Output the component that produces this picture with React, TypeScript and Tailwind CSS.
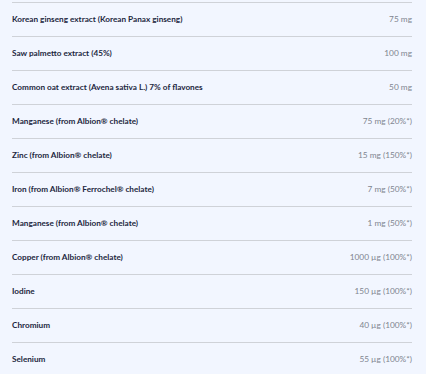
import React from "react";

const rows: [string, string][] = [
  ["Korean ginseng extract (Korean Panax ginseng)", "75 mg"],
  ["Saw palmetto extract (45%)", "100 mg"],
  ["Common oat extract (Avena sativa L.) 7% of flavones", "50 mg"],
  ["Manganese (from Albion® chelate)", "75 mg (20%*)"],
  ["Zinc (from Albion® chelate)", "15 mg (150%*)"],
  ["Iron (from Albion® Ferrochel® chelate)", "7 mg (50%*)"],
  ["Manganese (from Albion® chelate)", "1 mg (50%*)"],
  ["Copper (from Albion® chelate)", "1000 µg (100%*)"],
  ["Iodine", "150 µg (100%*)"],
  ["Chromium", "40 µg (100%*)"],
  ["Selenium", "55 µg (100%*)"],
];

export default function App() {
  return (
    <div className="w-[426px] h-[374px] overflow-hidden bg-[#f2f6ff] pt-[2px]" style={{ fontFamily: "Lato, 'Noto Sans', sans-serif" }}>
      <div className="mx-[12px] w-[400px]">
        {rows.map(([l, v], i) => (
          <div key={i} className="flex items-center justify-between h-[34px] border-t border-[#cfd2d8]">
            <span className="text-[8.2px] font-bold text-[#1c2740]">{l}</span>
            <span className="text-[8.3px] text-[#80858f]">{v}</span>
          </div>
        ))}
      </div>
    </div>
  );
}
